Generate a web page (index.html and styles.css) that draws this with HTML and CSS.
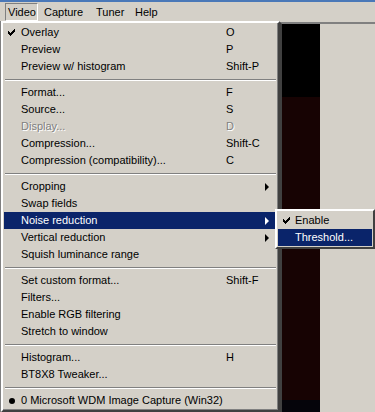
FILE: index.html
```html
<!DOCTYPE html>
<html>
<head>
<meta charset="UTF-8">
<title>Video capture</title>
	<link rel="stylesheet" href="styles.css">
</head>
<body>
	<div class="titlestrip"></div>

	<div class="menubar">
		<span class="bar-item pressed">Video</span>
		<span class="bar-item capture">Capture</span>
		<span class="bar-item">Tuner</span>
		<span class="bar-item">Help</span>
	</div>

	<div class="main">
		<div class="menu">
			<div class="item"><span class="mark"><svg width="8" height="7" viewBox="0 0 8 7"><path d="M0 2h1v1h1v1h1v-1h1v-1h1v-1h1v-1h1v3h-1v1h-1v1h-1v1h-1v1h-1v-1h-1v-1h-1v-1h-1z" fill="#000"/></svg></span><span class="label">Overlay</span><span class="key">O</span><span class="arrow"></span></div>
			<div class="item"><span class="mark"></span><span class="label">Preview</span><span class="key">P</span><span class="arrow"></span></div>
			<div class="item"><span class="mark"></span><span class="label">Preview w/ histogram</span><span class="key">Shift-P</span><span class="arrow"></span></div>
			<div class="sep"></div>
			<div class="item"><span class="mark"></span><span class="label">Format...</span><span class="key">F</span><span class="arrow"></span></div>
			<div class="item"><span class="mark"></span><span class="label">Source...</span><span class="key">S</span><span class="arrow"></span></div>
			<div class="item disabled"><span class="mark"></span><span class="label">Display...</span><span class="key">D</span><span class="arrow"></span></div>
			<div class="item"><span class="mark"></span><span class="label">Compression...</span><span class="key">Shift-C</span><span class="arrow"></span></div>
			<div class="item"><span class="mark"></span><span class="label">Compression (compatibility)...</span><span class="key">C</span><span class="arrow"></span></div>
			<div class="sep"></div>
			<div class="item"><span class="mark"></span><span class="label">Cropping</span><span class="key"></span><span class="arrow"><i class="tri"></i></span></div>
			<div class="item"><span class="mark"></span><span class="label">Swap fields</span><span class="key"></span><span class="arrow"></span></div>
			<div class="item active"><span class="mark"></span><span class="label">Noise reduction</span><span class="key"></span><span class="arrow"><i class="tri"></i></span></div>
			<div class="item"><span class="mark"></span><span class="label">Vertical reduction</span><span class="key"></span><span class="arrow"><i class="tri"></i></span></div>
			<div class="item"><span class="mark"></span><span class="label">Squish luminance range</span><span class="key"></span><span class="arrow"></span></div>
			<div class="sep"></div>
			<div class="item"><span class="mark"></span><span class="label">Set custom format...</span><span class="key">Shift-F</span><span class="arrow"></span></div>
			<div class="item"><span class="mark"></span><span class="label">Filters...</span><span class="key"></span><span class="arrow"></span></div>
			<div class="item"><span class="mark"></span><span class="label">Enable RGB filtering</span><span class="key"></span><span class="arrow"></span></div>
			<div class="item"><span class="mark"></span><span class="label">Stretch to window</span><span class="key"></span><span class="arrow"></span></div>
			<div class="sep"></div>
			<div class="item"><span class="mark"></span><span class="label">Histogram...</span><span class="key">H</span><span class="arrow"></span></div>
			<div class="item"><span class="mark"></span><span class="label">BT8X8 Tweaker...</span><span class="key"></span><span class="arrow"></span></div>
			<div class="sep"></div>
			<div class="item"><span class="mark"><i class="dot"></i></span><span class="label wide">0 Microsoft WDM Image Capture (Win32)</span></div>
		</div>

		<div class="client">
			<div class="video">
				<div class="v-top"></div>
				<div class="v-mid"></div>
				<div class="v-bot"></div>
			</div>
		</div>

		<!-- submenu for Noise reduction -->
		<div class="submenu">
			<div class="item"><span class="mark"><svg width="8" height="7" viewBox="0 0 8 7"><path d="M0 2h1v1h1v1h1v-1h1v-1h1v-1h1v-1h1v3h-1v1h-1v1h-1v1h-1v1h-1v-1h-1v-1h-1v-1h-1z" fill="#000"/></svg></span><span class="label">Enable</span></div>
			<div class="item active"><span class="mark"></span><span class="label">Threshold...</span></div>
		</div>
	</div>
</body>
</html>
```

FILE: styles.css
```css
body{
	margin: 0;
	width: 375px;
	height: 412px;
	overflow: hidden;
	background-color: #d4d0c8;
	font-family: "Liberation Sans", Arial, sans-serif;
	font-size: 11px;
	color: #000;
}
.titlestrip{
	height: 2px;
	background-color: #4a78b8;
}
.menubar{
	height: 19px;
	display: flex;
	align-items: flex-start;
	padding-left: 5px;
}
.bar-item{
	box-sizing: border-box;
	width: 39px;
	height: 18px;
	line-height: 16px;
	padding-left: 5px;
	margin-top: 1px;
	border: 1px solid transparent;
	white-space: nowrap;
}
.bar-item.capture{
	width: 52px;
}
.bar-item.pressed{
	width: 33px;
	padding-left: 2px;
	border-color: #808080 #fff #fff #808080;
}
.main{
	position: relative;
	display: flex;
	border-left: 1px solid #808080;
	height: 391px;
}
.menu{
	width: 273px;
	padding: 1px;
	border: 2px solid;
	border-color: #fff #404040 #404040 #fff;
	box-shadow: inset -1px -1px 0 #808080;
	flex-shrink: 0;
	align-self: flex-start;
}
.item{
	display: flex;
	height: 17px;
	line-height: 17px;
	white-space: nowrap;
}
.mark{
	width: 17px;
	flex-shrink: 0;
	display: flex;
	align-items: center;
	justify-content: center;
}
.mark svg{
	margin-left: -2px;
}
.label{
	width: 205px;
	flex-shrink: 0;
}
.label.wide{
	width: auto;
}
.key{
	flex: 1;
}
.arrow{
	width: 12px;
	display: flex;
	align-items: center;
}
.tri{
	display: block;
	width: 0;
	height: 0;
	border-top: 4px solid transparent;
	border-bottom: 4px solid transparent;
	border-left: 4px solid #000;
}
.dot{
	display: block;
	width: 6px;
	height: 6px;
	border-radius: 50%;
	background-color: #000;
	margin-left: -1px;
}
.item.active{
	background-color: #0a246a;
	color: #fff;
}
.item.active .tri{
	border-left-color: #fff;
}
.item.disabled{
	color: #808080;
	text-shadow: 1px 1px 0 #fff;
}
.sep{
	height: 1px;
	margin: 4px 1px 3px 1px;
	border-bottom: 1px solid #fff;
	background-color: #808080;
}
.client{
	flex: 1;
	margin-top: 1px;
	border-top: 2px solid #808080;
	border-left: 2px solid #404040;
	display: flex;
}
.video{
	width: 38px;
	display: flex;
	flex-direction: column;
}
.v-top{
	height: 73px;
	background-color: #000;
}
.v-mid{
	flex: 1;
	background-color: #170303;
}
.v-bot{
	height: 12px;
	background-color: #05040a;
}
.submenu{
	position: absolute;
	left: 274px;
	top: 188px;
	width: 94px;
	padding: 1px;
	border: 2px solid;
	border-color: #fff #404040 #404040 #fff;
	background-color: #d4d0c8;
}
.submenu .label{
	width: auto;
}
.submenu .mark svg{
	margin-left: 0;
}
```
